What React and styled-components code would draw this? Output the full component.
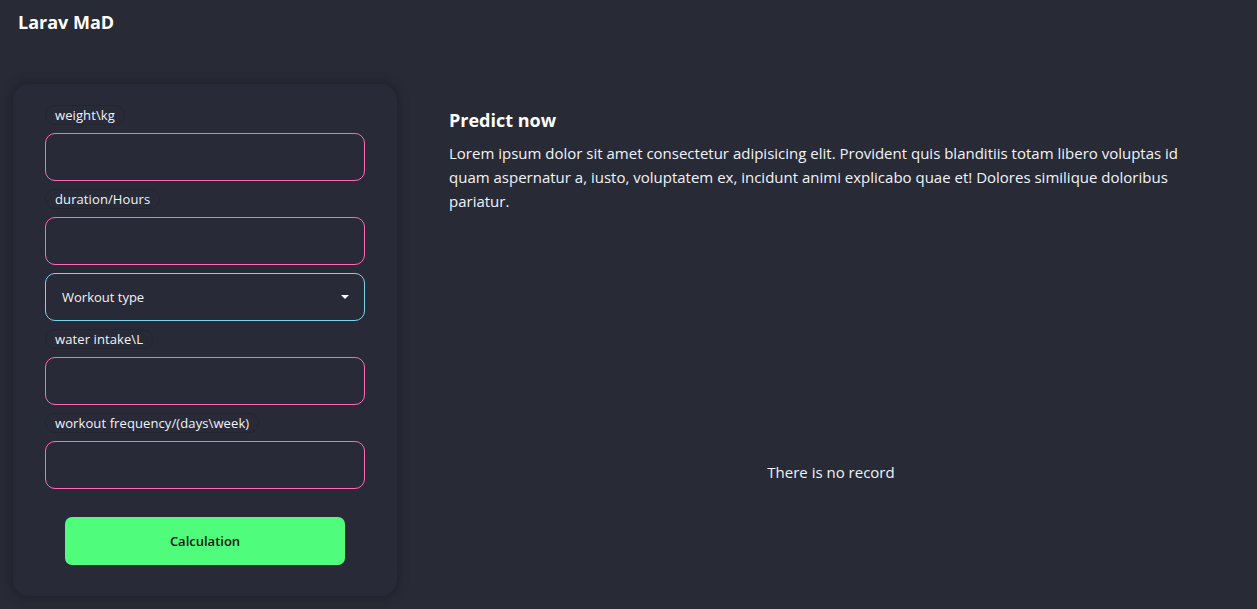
import React from "react"
import styled, { createGlobalStyle } from "styled-components"

const GlobalStyle = createGlobalStyle`
  html, body {
    margin: 0;
    padding: 0;
    background: #282a36;
    color: #f4f6fb;
    font-family: "Open Sans", "Noto Sans", sans-serif;
  }
  * { box-sizing: border-box; }
`

const Page = styled.div`
  width: 1257px;
  height: 609px;
  background: #282a36;
  overflow: hidden;
`

const TopBar = styled.header`
  height: 44px;
  padding: 10px 18px 0;
  font-size: 18px;
  font-weight: 700;
  color: #ffffff;
`

const Main = styled.main`
  display: flex;
  gap: 52px;
  padding: 40px 44px 0 13px;
`

const Card = styled.form`
  width: 384px;
  height: 512px;
  flex-shrink: 0;
  padding: 21px 32px 0;
  background: #282a37;
  border-radius: 16px;
  box-shadow: 0 0 12px rgba(10, 12, 20, 0.35);
  display: flex;
  flex-direction: column;
  gap: 8px;
`

const Field = styled.div`
  display: flex;
  flex-direction: column;
  align-items: flex-start;
  gap: 8px;
`

const Label = styled.label`
  padding: 1px 9px;
  border-radius: 10px;
  border: 1px solid #23252f;
  font-size: 13px;
  line-height: 16px;
  letter-spacing: 0.1px;
  color: #f1f4fa;
`

const Input = styled.input`
  width: 320px;
  height: 48px;
  background: transparent;
  border: 1px solid #ff6cb4;
  border-radius: 10px;
  outline: none;
  color: #fff;
  padding: 0 16px;
  font: inherit;
`

const SelectBox = styled.div`
  width: 320px;
  height: 48px;
  border: 1px solid #7fd4ea;
  border-radius: 10px;
  display: flex;
  align-items: center;
  justify-content: space-between;
  padding: 0 15px 0 16px;
  font-size: 13px;
  color: #f1f4fa;
`

const Caret = styled.span`
  width: 0;
  height: 0;
  border-left: 4px solid transparent;
  border-right: 4px solid transparent;
  border-top: 4px solid #ffffff;
`

const SubmitButton = styled.button`
  align-self: center;
  margin-top: 20px;
  width: 280px;
  height: 48px;
  border: none;
  border-radius: 7px;
  background: #50fc7c;
  color: #111;
  font-family: inherit;
  font-size: 13px;
  font-weight: 600;
`

const Content = styled.section`
  flex: 1;
  padding-top: 24px;
  display: flex;
  flex-direction: column;
`

const Title = styled.h2`
  margin: 0 0 9px;
  font-size: 18px;
  font-weight: 700;
  color: #fff;
`

const Text = styled.p`
  margin: 0;
  font-size: 15px;
  line-height: 24px;
  color: #f1f4fa;
`

const Empty = styled.div`
  margin-top: 249px;
  text-align: center;
  font-size: 15px;
  color: #f1f4fa;
`

const fields = [
  { label: "weight\\kg" },
  { label: "duration/Hours" },
  { select: "Workout type" },
  { label: "water intake\\L" },
  { label: "workout frequency/(days\\week)" }
]

export default function App() {
  return (
    <Page>
      <GlobalStyle />
      <TopBar>Larav MaD</TopBar>
      <Main>
        <Card onSubmit={e => e.preventDefault()}>
          {fields.map((f, i) =>
            f.select ? (
              <SelectBox key={i}>
                <span>{f.select}</span>
                <Caret />
              </SelectBox>
            ) : (
              <Field key={i}>
                <Label>{f.label}</Label>
                <Input />
              </Field>
            )
          )}
          <SubmitButton type="submit">Calculation</SubmitButton>
        </Card>
        <Content>
          <Title>Predict now</Title>
          <Text>
            Lorem ipsum dolor sit amet consectetur adipisicing elit. Provident
            quis blanditiis totam libero voluptas id quam aspernatur a, iusto,
            voluptatem ex, incidunt animi explicabo quae et! Dolores similique
            doloribus pariatur.
          </Text>
          <Empty>There is no record</Empty>
        </Content>
      </Main>
    </Page>
  )
}
